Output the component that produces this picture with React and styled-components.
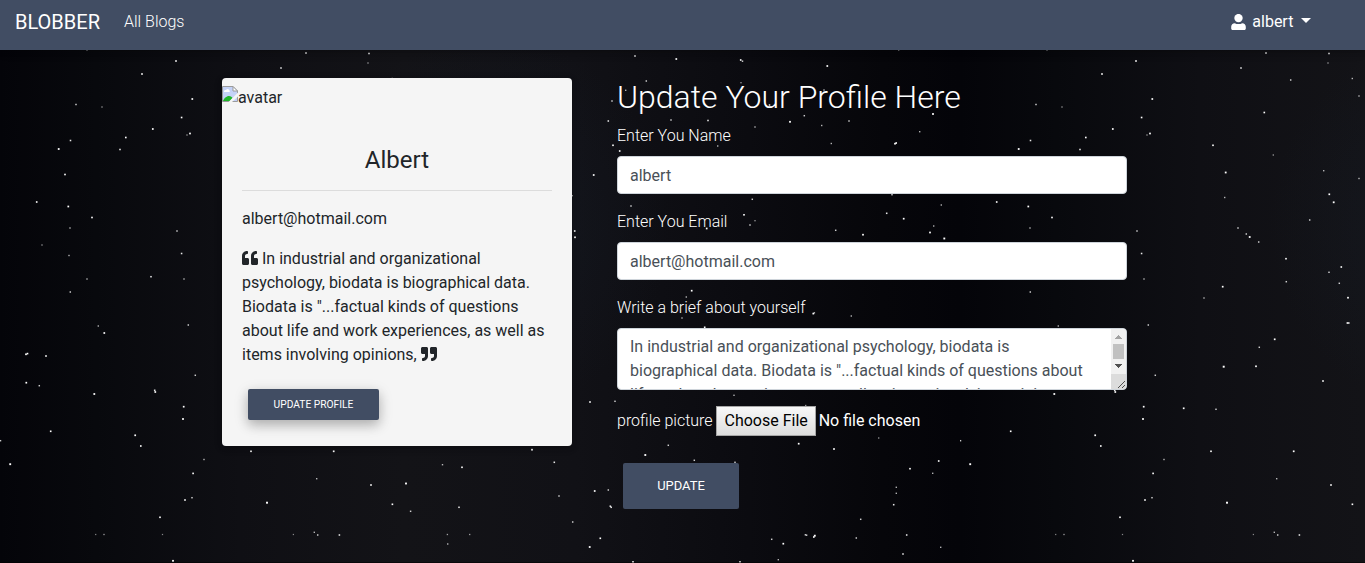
import React from 'react';
import styled, { createGlobalStyle } from 'styled-components';
import { FaQuoteLeft, FaQuoteRight } from 'react-icons/fa';

const GlobalStyle = createGlobalStyle`
  *, *::before, *::after { box-sizing: border-box; }
  html, body { margin: 0; height: 100%; overflow: hidden; }
  body {
    font-family: Roboto, "Liberation Sans", sans-serif;
    font-size: 16px;
    line-height: 24px;
    font-weight: 400;
    color: #212529;
    background: #0b0b10;
  }
`;

const Page = styled.div`
  position: relative;
  isolation: isolate;
  height: 563px;
  overflow: hidden;
`;

const Sky = styled.svg`
  position: absolute;
  inset: 0;
  z-index: -1;
  display: block;
`;

const Navbar = styled.nav`
  display: flex;
  align-items: center;
  height: 50px;
  padding: 0 53.6px 7px 15px;
  background: #414d63;
  color: #fff;
  box-shadow: 0 2px 5px rgba(0, 0, 0, 0.16), 0 2px 10px rgba(0, 0, 0, 0.12);
`;

const Brand = styled.a`
  font-size: 20px;
  line-height: 30px;
  margin-right: 24px;
`;

const NavLink = styled.a`
  font-weight: 300;
`;

const UserMenu = styled.a`
  display: flex;
  align-items: center;
  margin-left: auto;

  svg { margin-right: 6px; }

  &::after {
    content: "";
    margin-left: 8px;
    margin-top: -2px;
    border-top: 5px solid #fff;
    border-left: 5px solid transparent;
    border-right: 5px solid transparent;
  }
`;

const Main = styled.main`
  display: grid;
  grid-template-columns: 350px 510px;
  column-gap: 45px;
  align-items: start;
  padding: 28px 0 0 222px;
`;

const Card = styled.section`
  height: 368px;
  padding-top: 8px;
  border-radius: 4px;
  background: #f5f5f5;
  box-shadow: 0 2px 5px rgba(0, 0, 0, 0.16), 0 2px 10px rgba(0, 0, 0, 0.12);
`;

const Avatar = styled.div`
  display: flex;
  height: 24px;
`;

const CardBody = styled.div`
  padding: 36px 20px 0;
`;

const CardTitle = styled.h4`
  margin: 0;
  font-size: 24px;
  line-height: 28px;
  font-weight: 400;
  text-align: center;
`;

const Divider = styled.hr`
  margin: 16px 0;
  border: 0;
  border-top: 1px solid #dcdcdc;
`;

const CardText = styled.p`
  margin: 0 0 16px;

  svg { vertical-align: -2px; }
`;

const Button = styled.button`
  display: block;
  border: 0;
  border-radius: 2px;
  background: #414d63;
  color: #fff;
  font-family: inherit;
  font-weight: 400;
  text-align: center;
  text-transform: uppercase;
  padding: ${(p) => (p.$small ? '0' : '0 0 2px')};
  width: ${(p) => (p.$small ? '131px' : '116px')};
  height: ${(p) => (p.$small ? '31px' : '46px')};
  font-size: ${(p) => (p.$small ? '10.24px' : '12.96px')};
  margin: ${(p) => (p.$small ? '22px 0 0 6px' : '27px 0 0 6px')};
  box-shadow: ${(p) =>
    p.$small ? '0 5px 11px rgba(0,0,0,.18), 0 4px 15px rgba(0,0,0,.15)' : 'none'};
`;

const Form = styled.form`
  color: #fff;
`;

const Heading = styled.h2`
  margin: 0 0 8px;
  font-size: 32px;
  line-height: 38px;
  font-weight: 300;
`;

const Group = styled.div`
  margin-bottom: 16px;
`;

const Label = styled.label`
  display: block;
  margin-bottom: 8px;
  font-weight: 300;
`;

const Input = styled.input`
  display: block;
  width: 100%;
  height: 38px;
  padding: 6px 12px;
  border: 1px solid #ced4da;
  border-radius: 4px;
  background: #fff;
  color: #495057;
  font: inherit;
  outline: none;
`;

const AreaFrame = styled.div`
  display: flex;
  height: 62px;
  overflow: hidden;
  border: 1px solid #ced4da;
  border-radius: 4px;
  background: #fff;
`;

const TextArea = styled.textarea`
  flex: 1;
  height: 60px;
  padding: 6px 12px;
  border: 0;
  background: transparent;
  color: #495057;
  font: inherit;
  overflow: hidden;
  resize: none;
  outline: none;
`;

const ScrollBar = styled.svg`
  display: block;
  flex: none;
`;

const FileRow = styled.div`
  display: flex;
  align-items: center;
  height: 30px;
`;

const FileLabel = styled.label`
  font-weight: 300;
  margin-right: 3px;
`;

const FileButton = styled.span`
  width: 100px;
  height: 30px;
  padding-left: 1px;
  border: 1px solid #a6a6a6;
  background: linear-gradient(#f8f8f8, #dddddd);
  color: #000;
  text-align: center;
  line-height: 28px;
  margin-right: 3px;
`;

// Stars of one 960px tile: x, y, brightness.
const TILE = 960;
const STARS = [
  [87,50,.5],[176,61,.9],[142,74,.9],[306,53,.8],[369,53.5,.8],[368,63,.5],[281,68,.8],[76,104.5,.7],[102,107,.5],[192.3,99,1],
  [181.6,117.5,.9],[152.8,129,1],[125.8,137.5,.9],[120,149.5,.8],[190,133.5,1],[187,135,.5],[70.5,140.5,.8],[58.7,149,1.1],
  [65,174.5,.9],[36.7,202,.9],[68.3,206.5,1],[92,217.5,.9],[70,228,.6],[42,245,.5],[69,255.5,.6],[177,231,.7],[181.6,253.5,.8],
  [87,279,.6],[151,276.7,.8],[184,279,.6],[330.7,80,.7],[392.3,78.5,.6],[399,96,.6],[304.3,112.5,.9],[253,145.3,.9],
  [313.3,155,.5],[265.7,172.5,1.1],[264.7,197.5,.6],[363.7,170.7,.6],[399,178.5,.6],[369.3,194.3,1],[373.7,202.3,1.1],
  [349.7,220,.7],[278,228,.7],[286.3,234,.7],[289.7,237,1.1],[298.7,242,.7],[326,258.7,.9],[381.3,267,.9],[369,272.3,.7],
  [933,114,1.1],[919.7,131.7,.6],[941.3,205,.6],[933.7,226,.6],[930,232.5,1],[944.3,238.5,1.2],[635,56,.8],[676.3,59,1],
  [740.7,60,.9],[742.5,61.2,.7],[827.3,66,1],[646.3,81,.7],[741,82.7,.5],[625.7,90.3,.6],[612,101,.7],[608.3,121,.8],
  [671,120,.7],[708,120.5,.8],[755,127,.6],[790,121.8,1.1],[804.3,115.7,.7],[824,90,.6],[769.5,105,.8],[821.7,125.5,.6],
  [849,121,.7],[831.3,143.5,.6],[895,143.7,1],[896.2,143,.9],[613,145.3,.9],[619.7,151,.9],[717.7,146,.6],[593.7,175,1],
  [572.3,195.7,.5],[574.7,231,.9],[575,237.3,1],[631,206,.7],[752.3,199.3,.7],[744,214.8,.9],[755,220.7,.5],[750,225,.7],
  [706.7,228.5,1],[835.7,230.3,.7],[863,234.7,1],[886.7,213.3,.8],[903.7,218.7,1],[892,194.7,.7],[898.7,50,.5],
  [70.3,292,.7],[98.3,326,.6],[104.3,333,1],[26,354.3,1],[27.5,353.6,.9],[46,356,.9],[26.3,382.7,1],[39.3,385.7,.7],
  [94.3,394,1.1],[154.7,390.3,.8],[155.3,392,1],[183.7,406.7,1],[183,419,1.1],[195.3,375.3,.7],[188.3,325,.7],[50.7,431.3,.9],
  [135.2,435.3,1],[140.8,446,.9],[.5,440.7,.7],[10.2,464.2,1.2],[204,459.5,.6],[193.1,473.4,.9],[185,500,.9],[192,497.7,.7],
  [160,517.3,.9],[95.7,534.5,.4],[104,534.5,.5],[162.5,534.5,.4],[173,560.8,1.1],[251,451.3,.9],[333.7,451.3,1],
  [316.7,478.7,.6],[371,485,.9],[406,483.5,1.2],[442.5,464.7,.6],[267,502.7,1.3],[392.4,504.3,.9],[410.6,511.3,.7],
  [293.4,534.5,.4],[314.3,532.3,.6],[317.7,535,.7],[339.4,535,.8],[447.4,534.5,.5],[447.7,544,.6],[262.7,286.7,1],
  [244,298,.6],[326.3,281.7,.7],[379.3,283.3,.7],[388,297.7,1],[387.4,323,.9],[388.8,323,.8],[314.7,339.3,1],[299.3,347.3,.7],
  [296,366.3,1],[263.7,366.7,1.3],[363,381,.9],[223.7,408.3,1],[256,409.3,.7],[910,468.7,.9],[938.7,461,.9],[932.7,473.3,.6],
  [940.7,547.3,.6],[691.7,290.7,1],[686.3,297,.6],[682,318,.6],[813.3,313.6,1],[814.4,312.8,.6],[851.3,316,.6],[704.7,327.3,.9],
  [734,395.3,.6],[590,402,.9],[615,401.3,.7],[805.7,405.5,.5],[668.3,445.3,.7],[645.3,455,1.2],[694.3,460.3,.7],
  [735,462.3,.7],[798.7,443.7,1],[834,449,1],[878.7,438,.5],[532,449.7,1],[554.3,462.3,.8],[462,467.3,.9],[594.7,491,1],
  [608.3,490,.7],[559,496,.7],[610.3,506.2,.8],[611.2,507.3,.8],[459,507.3,.8],[572.7,522,.7],[469.7,534.5,.5],
  [600.3,538.3,.9],[589.7,547,1.1],[633,562,1],[740,562,.9],[771.7,539.3,.7],[783.3,543.7,1],[778.3,559.7,.6],[805.4,534.8,.7],
  [806.6,535.2,.7],[813.8,537,.9],[814.8,535.7,1.2],[856.3,538,.7],[860.7,519.3,.7],[893.7,504.7,.8],[896.3,487.3,.6],
  [896.3,493.3,.6],[906.7,535,.8],[903,554,.8],
];

function StarField() {
  return (
    <Sky width="1365" height="563" aria-hidden="true">
      <defs>
        <linearGradient id="night">
          <stop offset="0" stopColor="#040409" />
          <stop offset="0.1" stopColor="#08090d" />
          <stop offset="0.25" stopColor="#0f0f14" />
          <stop offset="0.42" stopColor="#131317" />
          <stop offset="0.6" stopColor="#111116" />
          <stop offset="0.78" stopColor="#0b0b10" />
          <stop offset="0.92" stopColor="#06060a" />
          <stop offset="1" stopColor="#040409" />
        </linearGradient>
        <radialGradient id="haze">
          <stop offset="0" stopColor="#161d28" stopOpacity="0.5" />
          <stop offset="1" stopColor="#161d28" stopOpacity="0" />
        </radialGradient>
        <pattern id="tile" width={TILE} height="563" patternUnits="userSpaceOnUse">
          <rect width={TILE} height="563" fill="url(#night)" />
          <ellipse cx="490" cy="225" rx="180" ry="190" fill="url(#haze)" />
          {STARS.map(([x, y, b], i) => {
            const size = 0.9 + b * 0.8;
            return (
              <rect
                key={i}
                x={x - size / 2}
                y={y - size / 2}
                width={size}
                height={size}
                fill="#fff"
                opacity={Math.min(1, b + 0.1)}
              />
            );
          })}
        </pattern>
      </defs>
      <rect width="1365" height="563" fill="url(#tile)" />
      <rect y="562" width="1365" height="1" fill="#000" opacity="0.5" />
    </Sky>
  );
}

function UserIcon() {
  return (
    <svg width="15" height="16" viewBox="0 0 15 16" fill="#fff" aria-hidden="true">
      <circle cx="7.500" cy="4.100" r="4.200" />
      <path d="M3.800 9.200c1 .55 2.300.9 3.700.9s2.700-.35 3.700-.9c2.200 0 3.600 1.500 3.600 3.600v1.700c0 .9-.6 1.500-1.500 1.500H1.700C.8 16 .2 15.400.2 14.500v-1.700c0-2.100 1.400-3.600 3.600-3.600z" />
    </svg>
  );
}

function BrokenImage() {
  return (
    <svg width="16" height="16" viewBox="0 0 16 16" aria-hidden="true">
      <path d="M.5.5H11L15.500 5V15.500H.5z" fill="#c4d2f7" stroke="#9b9b9b" />
      <path d="M2 5.500a1.500 1.500 0 0 1 2-1.400 2 2 0 0 1 3.700.8A1 1 0 0 1 7.500 6H2z" fill="#fff" />
      <path d="M1 15c.8-2.500 3.500-5 6-5 1.800 0 3 1 3.500 2L8 15z" fill="#21b62c" />
      <path d="M11 .5V5h4.500z" fill="#fff" stroke="#9b9b9b" />
      <path d="M16 6.500 6.500 16H10L16 10.500z" fill="#f5f5f5" />
    </svg>
  );
}

function AreaScrollBar() {
  return (
    <ScrollBar width="15" height="60" shapeRendering="crispEdges" aria-hidden="true">
      <rect width="15" height="45" fill="#f1f1f1" />
      <path d="M4 10h7L7.500 6z" fill="#a3a3a3" />
      <rect x="2" y="15" width="11" height="15" fill="#c1c1c1" />
      <path d="M4 35h7l-3.500 4z" fill="#505050" />
      <rect y="45" width="15" height="15" fill="#dcdcdc" />
      <path d="M7 59l7-7M11 59l3-3" stroke="#505050" shapeRendering="auto" />
    </ScrollBar>
  );
}

const BIO =
  'In industrial and organizational psychology, biodata is biographical data. Biodata is "...factual kinds of questions about life and work experiences, as well as items involving opinions,';

export default function App() {
  return (
    <Page>
      <GlobalStyle />
      <StarField />
      <Navbar>
        <Brand>BLOBBER</Brand>
        <NavLink>All Blogs</NavLink>
        <UserMenu>
          <UserIcon />
          albert
        </UserMenu>
      </Navbar>
      <Main>
        <Card>
          <Avatar>
            <BrokenImage />
            avatar
          </Avatar>
          <CardBody>
            <CardTitle>Albert</CardTitle>
            <Divider />
            <CardText>albert@hotmail.com</CardText>
            <CardText>
              <FaQuoteLeft size={16} /> {BIO} <FaQuoteRight size={16} />
            </CardText>
            <Button $small type="button">Update Profile</Button>
          </CardBody>
        </Card>
        <Form>
          <Heading>Update Your Profile Here</Heading>
          <Group>
            <Label>Enter You Name</Label>
            <Input defaultValue="albert" />
          </Group>
          <Group>
            <Label>Enter You Email</Label>
            <Input defaultValue="albert@hotmail.com" />
          </Group>
          <Group>
            <Label>Write a brief about yourself</Label>
            <AreaFrame>
              <TextArea defaultValue={BIO} spellCheck={false} />
              <AreaScrollBar />
            </AreaFrame>
          </Group>
          <FileRow>
            <FileLabel>profile picture</FileLabel>
            <FileButton>Choose File</FileButton>
            <span>No file chosen</span>
          </FileRow>
          <Button type="button">Update</Button>
        </Form>
      </Main>
    </Page>
  );
}
